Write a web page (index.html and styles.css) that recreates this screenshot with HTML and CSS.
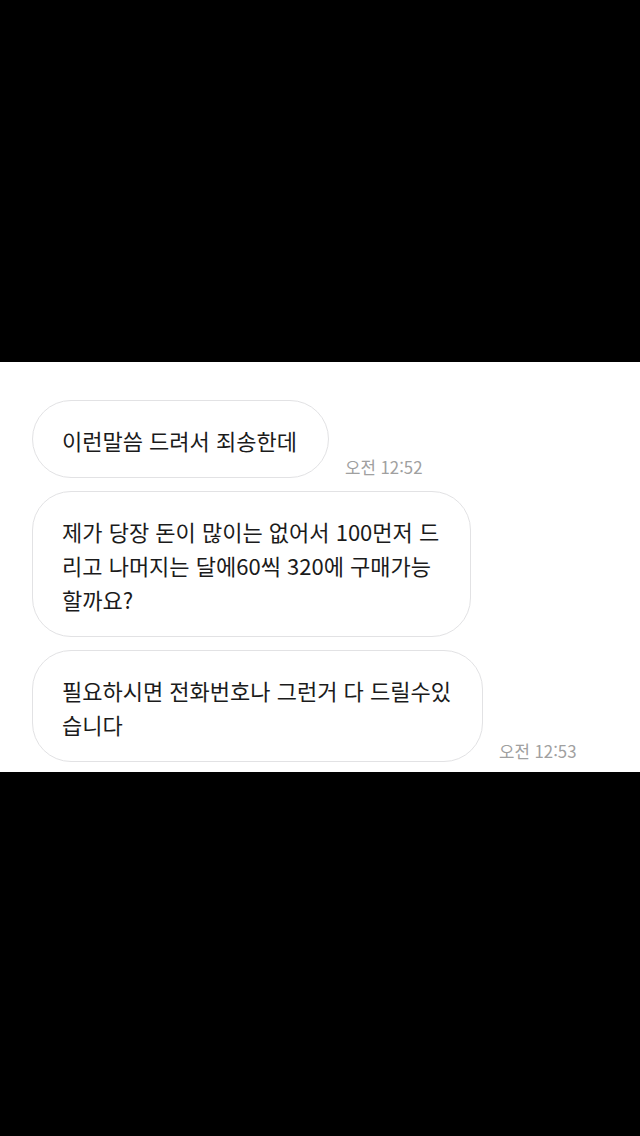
FILE: index.html
```
<!DOCTYPE html>
<html lang="ko">
<head>
  <meta charset="UTF-8">
  <title>Chat</title>
  <link rel="stylesheet" href="styles.css">
</head>
<body>
  <div class="chat">
    <div class="row">
      <div class="bubble">이런말씀 드려서 죄송한데</div>
      <span class="time">오전 12:52</span>
    </div>
    <div class="row">
      <div class="bubble">제가 당장 돈이 많이는 없어서 100먼저 드<br>리고 나머지는 달에60씩 320에 구매가능<br>할까요?</div>
    </div>
    <div class="row">
      <div class="bubble">필요하시면 전화번호나 그런거 다 드릴수있<br>습니다</div>
      <span class="time">오전 12:53</span>
    </div>
  </div>
</body>
</html>
```

FILE: styles.css
```
body {
  margin: 0;
  background: #000;
  font-family: "Noto Sans CJK KR", "Noto Sans", sans-serif;
}

.chat {
  background: #fff;
  margin-top: 362px;
  height: 410px;
  box-sizing: border-box;
  padding: 38px 0 0 32px;
  display: flex;
  flex-direction: column;
  gap: 13px;
}

.row {
  display: flex;
  align-items: flex-end;
  gap: 16px;
}

.bubble {
  border: 1px solid #e2e2e4;
  border-radius: 39px;
  padding: 22px 31px 20px 29px;
  font-size: 22px;
  line-height: 34px;
  color: #1b1b1b;
}

.time {
  font-size: 16.8px;
  line-height: 22px;
  color: #a0a0a0;
}
```
